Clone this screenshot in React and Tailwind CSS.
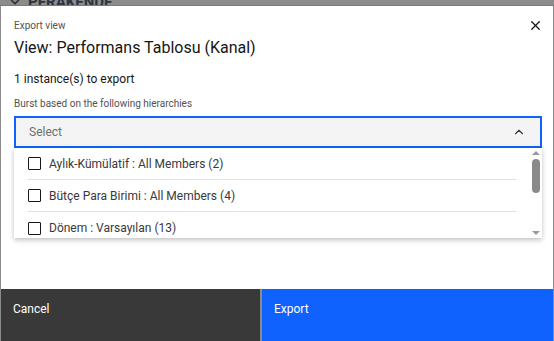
import { ChevronDown, ChevronUp, X } from 'lucide-react'

const items = [
  'Aylık-Kümülatif : All Members (2)',
  'Bütçe Para Birimi : All Members (4)',
  'Dönem : Varsayılan (13)',
]

export default function App() {
  return (
    <div className="w-[554px] h-[341px] bg-[#8c8c8c] flex flex-col overflow-hidden" style={{ fontFamily: 'Roboto, "Noto Sans", sans-serif' }}>
      {/* page behind the overlay */}
      <div className="h-[6px] shrink-0 overflow-hidden relative border-b border-[#7a7a7a]">
        <div className="absolute left-[8px] top-[-9px] flex items-center gap-[6px] text-[#2b3440] text-[15px] font-bold">
          <ChevronDown size={14} strokeWidth={3} />
          <span>PERAKENDE</span>
        </div>
      </div>

      <div className="flex-1 ml-[1px] mr-[1px] bg-white flex flex-col">
        <div className="flex-1 px-[13px] pt-[13px] relative">
          <button className="absolute right-[10px] top-[12px] text-[#161616]">
            <X size={15} strokeWidth={2} />
          </button>
          <div className="text-[10px] leading-[14px] text-[#525252]">Export view</div>
          <div className="text-[16px] leading-[22px] text-[#161616] mt-[4px]">View: Performans Tablosu (Kanal)</div>
          <div className="text-[12px] leading-[16px] text-[#161616] mt-[12px]">1 instance(s) to export</div>
          <div className="text-[10px] leading-[14px] text-[#525252] mt-[10px]">Burst based on the following hierarchies</div>

          <div className="mt-[5px] w-[528px]">
            <div className="h-[32px] bg-[#f4f4f4] border-2 border-[#0f62fe] flex items-center justify-between pl-[13px] pr-[14px]">
              <span className="text-[12px] text-[#6f6f6f]">Select</span>
              <ChevronUp size={14} strokeWidth={2} className="text-[#393939]" />
            </div>
            <div className="h-[90px] bg-white shadow-[0_2px_5px_rgba(0,0,0,0.25)] flex">
              <div className="flex-1 pl-[14px] pr-[14px] overflow-hidden">
                {items.map((t, i) => (
                  <div key={t} className={`h-[32px] flex items-center gap-[8px] ${i < items.length - 1 ? 'border-b border-[#e0e0e0]' : ''}`}>
                    <span className="w-[13px] h-[13px] border border-[#161616] rounded-[1px] shrink-0" />
                    <span className="text-[12px] text-[#393939]">{t}</span>
                  </div>
                ))}
              </div>
              <div className="w-[12px] flex flex-col items-center py-[3px] bg-white">
                <span className="w-0 h-0 border-l-[4px] border-r-[4px] border-b-[4px] border-l-transparent border-r-transparent border-b-[#9a9a9a]" />
                <span className="mt-[4px] w-[8px] h-[34px] rounded-full bg-[#8a8a8a]" />
                <span className="flex-1" />
                <span className="w-0 h-0 border-l-[4px] border-r-[4px] border-t-[4px] border-l-transparent border-r-transparent border-t-[#9a9a9a]" />
              </div>
            </div>
          </div>
        </div>

        <div className="h-[52px] flex gap-[2px] bg-[#8c8c8c]">
          <button className="w-[259px] bg-[#393939] text-white text-[12px] text-left pl-[12px] pb-[13px]">Cancel</button>
          <button className="flex-1 bg-[#0f62fe] text-white text-[12px] text-left pl-[12px] pb-[13px]">Export</button>
        </div>
      </div>
    </div>
  )
}
